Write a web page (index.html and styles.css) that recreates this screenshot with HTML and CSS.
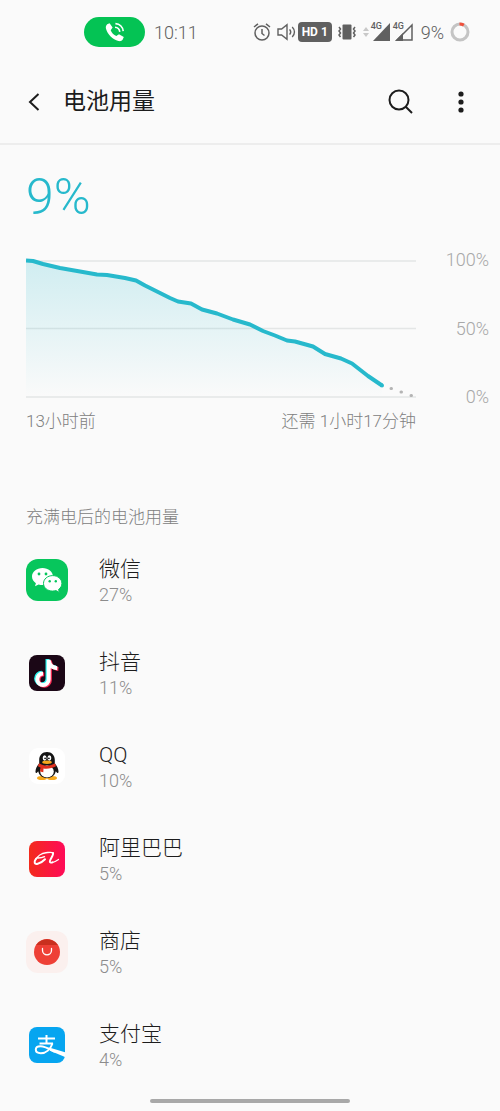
FILE: index.html
```html
<!DOCTYPE html>
<html lang="zh-CN">
<head>
  <meta charset="UTF-8">
  <meta name="viewport" content="width=device-width, initial-scale=1">
  <title>电池用量</title>
  <link rel="stylesheet" href="styles.css">
</head>
<body>

  <div class="status-bar">
    <div class="call-pill">
      <svg width="20" height="20" viewBox="0 0 20 20" fill="none" stroke="#fff">
        <path fill="#fff" stroke="none" d="M2.2 2.2 4.6 1.2 7.6 5.6 5.7 8.2C6.5 10.6 8.8 13 11.3 14L14 12.2 18.8 15 17.6 17.8C16.8 19 15.2 19.4 13.5 19 7.5 17.5 2.8 12.6 1 6.8.5 5 1 3.2 2.2 2.2z"/>
        <path stroke-width="1.6" d="M10 5.2c2.6.2 4.4 2 4.8 4.6M10.4 1.6c4.2.3 7.4 3.4 7.8 7.6"/>
      </svg>
    </div>
    <span class="time">10:11</span>
    <div class="status-icons">
      <svg width="18" height="20" viewBox="0 0 18 20" fill="none" stroke="#606060" stroke-width="1.5">
        <circle cx="9" cy="11" r="7"/>
        <path d="M9 7v4.5l2.5 2M1 5l4-3.2M17 5l-4-3.2"/>
      </svg>
      <svg class="speaker" width="19" height="18" viewBox="0 0 19 18" fill="none" stroke="#606060" stroke-width="1.4">
        <path d="M1 6h3.6L10 1.6v14.8L4.6 12H1zM12.6 6.4c1.4 1.6 1.4 3.6 0 5.2M15.2 4c3 3 3 7 0 10"/>
      </svg>
      <span class="hd">HD 1</span>
      <svg class="vibrate" width="18" height="18" viewBox="0 0 18 18" fill="none" stroke="#606060" stroke-width="1.5">
        <rect x="4.500" y="1.500" width="9" height="15" rx="1" fill="#606060" stroke="none"/>
        <path d="M1 4l1.500 2L1 8l1.500 2L1 12l1.500 2M17 4l-1.500 2L17 8l-1.500 2 1.500 2-1.500 2"/>
      </svg>
      <svg class="arrows" width="6" height="10" viewBox="0 0 6 10" fill="#c8c8c8">
        <path d="M0 4l3-4 3 4zM0 6l3 4 3-4z"/>
      </svg>
      <div class="signal">
        <svg width="19" height="20" viewBox="0 0 19 20"><path fill="#606060" d="M18 1v18H1z"/></svg>
        <span>4G</span>
      </div>
      <div class="signal">
        <svg width="19" height="20" viewBox="0 0 19 20"><path fill="none" stroke="#606060" stroke-width="1.5" d="M18 3v15H3z"/><path fill="#606060" d="M9 11v8H1z"/></svg>
        <span>4G</span>
      </div>
      <span class="battery">9%</span>
      <svg width="20" height="20" viewBox="0 0 20 20" fill="none" stroke-width="3">
        <circle cx="10" cy="10" r="8" stroke="#c4c4c4"/>
        <path stroke="#f0503c" d="M9.5 2c1.8 0 3 .3 4.3 1.1"/>
      </svg>
    </div>
  </div>

  <header class="header">
    <button class="icon-btn back" aria-label="返回">
      <svg width="12" height="18" viewBox="0 0 12 18" fill="none" stroke="#1c1c1c" stroke-width="2"><path d="M10.5 1 2 9l8.5 8"/></svg>
    </button>
    <h1>电池用量</h1>
    <button class="icon-btn search" aria-label="搜索">
      <svg width="26" height="26" viewBox="0 0 26 26" fill="none" stroke="#1c1c1c" stroke-width="2"><circle cx="11" cy="11" r="9.5"/><path d="M17.5 17.5 24 24"/></svg>
    </button>
    <button class="icon-btn more" aria-label="更多">
      <svg width="6" height="22" viewBox="0 0 6 22" fill="#1c1c1c"><circle cx="3" cy="3" r="2.6"/><circle cx="3" cy="11" r="2.6"/><circle cx="3" cy="19" r="2.6"/></svg>
    </button>
  </header>

  <main>
    <div class="level">9%</div>

    <div class="chart">
      <svg class="plot" viewBox="0 0 390 157" preserveAspectRatio="none" fill="none">
        <defs>
          <linearGradient id="fade" x1="0" y1="0" x2="0" y2="1">
            <stop offset="0" stop-color="#27b9cc" stop-opacity=".2"/>
            <stop offset="1" stop-color="#27b9cc" stop-opacity="0"/>
          </linearGradient>
        </defs>
        <path stroke="#e4e6e6" stroke-width="1.5" d="M0 11H390M0 78.5H390M0 147H390"/>
        <path fill="url(#fade)" d="M0 10 7 11 17 14 34 18 54 21.5 71 24.5 81 25 99 28 110 30.5 119 35.5 134 43 144 48 152 51.5 165 53.5 176 59.5 191 63.5 207 69.5 224 74.5 237 81 249 85.5 261 90.5 269 91.5 287 96.5 299 104 315 108.5 326 113.5 342 126 356 135.5V147H0z"/>
        <path stroke="#27b9cc" stroke-width="4" stroke-linejoin="round" d="M0 10.5 7 11 17 14 34 18 54 21.5 71 24.5 81 25 99 28 110 30.5 119 35.5 134 43 144 48 152 51.5 165 53.5 176 59.5 191 63.5 207 69.5 224 74.5 237 81 249 85.5 261 90.5 269 91.5 287 96.5 299 104 315 108.5 326 113.5 342 126 356 135.5"/>
        <circle cx="356" cy="135.5" r="2" fill="#27b9cc"/>
        <path stroke="#b4b4b4" stroke-width="3" stroke-linecap="round" d="M365 138.500h.5M375 142h.5M385 145.500h.5"/>
      </svg>
      <div class="scale">
        <span>100%</span>
        <span>50%</span>
        <span>0%</span>
      </div>
      <div class="range">
        <span>13小时前</span>
        <span>还需 1小时17分钟</span>
      </div>
    </div>

    <h2>充满电后的电池用量</h2>

    <ul class="apps">
      <li class="app">
        <svg class="app-icon" viewBox="0 0 42 42">
          <rect width="42" height="42" rx="12" fill="#07c65c"/>
          <path fill="#fff" d="M16.5 9C10.7 9 6 12.8 6 17.6c0 2.7 1.5 5 3.9 6.6L9 27.3l3.6-1.9c1.3.4 2.6.6 3.9.6C22.3 26 27 22.3 27 17.6S22.3 9 16.5 9z"/>
          <path fill="#fff" stroke="#07c65c" d="M26.7 16.6c-5.2 0-9.2 3.5-9.2 7.8s4 7.7 9.2 7.7c1.1 0 2.2-.2 3.2-.5l3.5 1.8-.8-3c2-1.4 3.3-3.5 3.3-6 0-4.3-4-7.8-9.2-7.8z"/>
          <g fill="#07c65c"><circle cx="13" cy="15" r="1.4"/><circle cx="20" cy="15" r="1.4"/><circle cx="23.7" cy="22.3" r="1.2"/><circle cx="29.8" cy="22.3" r="1.2"/></g>
        </svg>
        <div class="app-text">
          <div class="name">微信</div>
          <div class="percent">27%</div>
        </div>
      </li>
      <li class="app">
        <svg class="app-icon" viewBox="0 0 42 42" fill="none" stroke-width="4">
          <rect x="3" y="3" width="36" height="36" rx="8" fill="#1b0716"/>
          <path stroke="#25f4ee" d="M21.5 7v19.5a5.700 5.700 0 1 1-5.700-5.700M21.500 8c.8 4.500 4 7.200 8.500 7.500"/>
          <path stroke="#fe2c55" d="M23.900 8.500V28a5.700 5.700 0 1 1-5.700-5.700M23.900 9.500c.8 4.500 4 7.200 8.500 7.500"/>
          <path stroke="#fff" d="M22.700 7.700v19.500a5.700 5.700 0 1 1-5.700-5.700M22.700 8.700c.8 4.500 4 7.200 8.500 7.500"/>
        </svg>
        <div class="app-text">
          <div class="name">抖音</div>
          <div class="percent">11%</div>
        </div>
      </li>
      <li class="app">
        <svg class="app-icon" viewBox="0 0 42 42">
          <rect x="3" y="3" width="36" height="36" rx="9" fill="#fff"/>
          <ellipse cx="16" cy="33" rx="5" ry="2" fill="#f6a81c"/>
          <ellipse cx="26" cy="33" rx="5" ry="2" fill="#f6a81c"/>
          <path fill="#151515" d="M21 7c-4.7 0-7.8 3.4-7.8 8v3.5C11 21 9.3 24 9.5 27c.2 1.8 1.5 1 2.7-.8C13.2 30.5 16.5 33 21 33s7.8-2.500 8.800-6.800c1.200 1.800 2.500 2.600 2.700.8.200-3-1.500-6-3.700-8.500V15c0-4.600-3.100-8-7.800-8z"/>
          <ellipse cx="21" cy="26.5" rx="6.8" ry="6" fill="#fff"/>
          <ellipse cx="18.6" cy="13" rx="1.9" ry="2.7" fill="#fff"/>
          <ellipse cx="23.4" cy="13" rx="1.9" ry="2.7" fill="#fff"/>
          <circle cx="19.1" cy="13.3" r=".9" fill="#151515"/>
          <circle cx="22.9" cy="13.3" r=".9" fill="#151515"/>
          <ellipse cx="21" cy="17.3" rx="4.8" ry="1.7" fill="#f6a81c"/>
          <path fill="#e0301e" d="M13 18.3c5 3.2 11 3.2 16 0l1 3c-3.7 2-8.3 2.8-12.5 2.2l-.2 3.7-3.3-.6.5-4-2.6-1.3z"/>
        </svg>
        <div class="app-text">
          <div class="name">QQ</div>
          <div class="percent">10%</div>
        </div>
      </li>
      <li class="app">
        <svg class="app-icon" viewBox="0 0 42 42" fill="none">
          <defs>
            <linearGradient id="ali"><stop offset="0" stop-color="#f32b1c"/><stop offset="1" stop-color="#ff0a58"/></linearGradient>
          </defs>
          <rect x="3" y="3" width="36" height="36" rx="8" fill="url(#ali)"/>
          <g stroke="#fff" stroke-linecap="round">
            <path stroke-width="1.4" d="M10.500 20c3 .2 6-.3 8-1.300M9 22.500c2-4 6.500-7.500 11-7.800 2.500-.2 5.500-.9 7 .2"/>
            <path stroke-width="2" d="M10 20.800c-2.600 3.700-1.400 5.700 1.700 5 3.300-.8 5.500-2.600 7.300-4.500"/>
            <path stroke-width="2" d="M27 15c1 2.200-3.800 7-3.200 8.800.3.900 1.400 1 2.600.6"/>
            <path stroke-width="1.2" d="M26 24.600c2.600-.7 4.500-1.800 6.500-3.200"/>
          </g>
        </svg>
        <div class="app-text">
          <div class="name">阿里巴巴</div>
          <div class="percent">5%</div>
        </div>
      </li>
      <li class="app">
        <svg class="app-icon" viewBox="0 0 42 42" fill="none">
          <rect width="42" height="42" rx="12" fill="#fbf0ee"/>
          <circle cx="21" cy="21" r="13" fill="#ee4036"/>
          <path fill="#c9301f" d="M10.200 14h21.600a13 13 0 0 0-21.600 0z"/>
          <path stroke="#fff" stroke-width="1.3" stroke-linecap="round" d="M16.500 17.500v1.800a4.500 4.500 0 0 0 9 0v-1.800"/>
        </svg>
        <div class="app-text">
          <div class="name">商店</div>
          <div class="percent">5%</div>
        </div>
      </li>
      <li class="app">
        <svg class="app-icon" viewBox="0 0 42 42" fill="none" stroke="#fff" stroke-width="2">
          <rect x="3" y="3" width="36" height="36" rx="8" fill="#06a5f0" stroke="none"/>
          <path d="M20.500 11v8.500M12 14.500h17M13.500 19.500h13.500"/>
          <path d="M26.500 19.500c-2 5.500-6.500 9.700-11.700 9.700-3.300 0-5-1.600-5-3.600s1.900-3.400 4.700-3.400c4.500 0 10 3.300 14.500 5.600"/>
          <path fill="#fff" stroke="none" d="M24 23.700 39 28.200V33L24 26.800z"/>
        </svg>
        <div class="app-text">
          <div class="name">支付宝</div>
          <div class="percent">4%</div>
        </div>
      </li>
    </ul>
  </main>

  <div class="home-bar"></div>

</body>
</html>
```
FILE: styles.css
```css
* {
  box-sizing: border-box;
}

body {
  margin: 0;
  font-family: Roboto, "Noto Sans CJK SC", sans-serif;
  font-weight: 300;
  background: #fafafa;
  color: #1c1c1c;
}

/* status bar */
.status-bar {
  display: flex;
  align-items: center;
  height: 64px;
  padding: 0 30px 0 84px;
  color: #606060;
  font-size: 18px;
}

.call-pill {
  display: flex;
  align-items: center;
  justify-content: center;
  width: 61px;
  height: 30px;
  border-radius: 15px;
  background: #04c354;
}

.time {
  margin-left: 9px;
}

.status-icons {
  display: flex;
  align-items: center;
  margin-left: auto;
}

.speaker {
  margin-left: 6px;
}

.hd {
  margin-left: 2px;
  width: 34px;
  border-radius: 4px;
  background: #606060;
  color: #fff;
  font-size: 12px;
  font-weight: 700;
  line-height: 20px;
  text-align: center;
}

.vibrate {
  margin: 0 7px 0 6px;
}

.signal {
  position: relative;
  height: 20px;
  margin-left: 3px;
}

.signal span {
  position: absolute;
  top: 0;
  left: -1px;
  font-size: 9px;
  font-weight: 500;
  line-height: 9px;
}

.battery {
  margin: 0 6px 0 8px;
}

/* title bar */
.header {
  display: flex;
  align-items: center;
  height: 81px;
  padding: 0 36px 4px 28px;
  border-bottom: 2px solid #ededed;
}

.icon-btn {
  display: flex;
  padding: 0;
  border: none;
  background: none;
  cursor: pointer;
}

h1 {
  margin: 0 auto 0 23px;
  font-size: 23px;
  font-weight: 400;
  line-height: 32px;
}

.more {
  margin-left: 44px;
}

.level {
  padding: 24px 26px 0;
  font-size: 50px;
  line-height: 56px;
  color: #27b9cc;
}

/* chart */
.chart {
  display: grid;
  grid-template-columns: 1fr 73px;
  row-gap: 4px;
  padding: 25px 11px 0 26px;
  font-size: 17px;
  line-height: 20px;
}

.plot {
  display: block;
  width: 100%;
  height: 157px;
}

.scale {
  display: flex;
  flex-direction: column;
  justify-content: space-between;
  font-size: 18px;
  text-align: right;
  color: #a8a8a8;
}

.range {
  display: flex;
  justify-content: space-between;
  color: #808080;
}

/* app list */
h2 {
  margin: 74px 26px 5px;
  font-size: 17px;
  font-weight: 300;
  line-height: 24px;
  color: #808080;
}

.apps {
  margin: 0;
  padding: 0;
  list-style: none;
}

.app {
  display: flex;
  height: 93px;
  padding: 23px 26px 0;
}

.app-icon {
  width: 42px;
  height: 42px;
  margin: 2px 31px 0 0;
}

.name {
  font-size: 21px;
  line-height: 25px;
}

.percent {
  font-size: 18px;
  line-height: 25px;
  color: #8c8c8c;
}

.home-bar {
  width: 40%;
  height: 4px;
  margin: 7px auto 8px;
  border-radius: 2px;
  background: #a8a8a8;
}
```
